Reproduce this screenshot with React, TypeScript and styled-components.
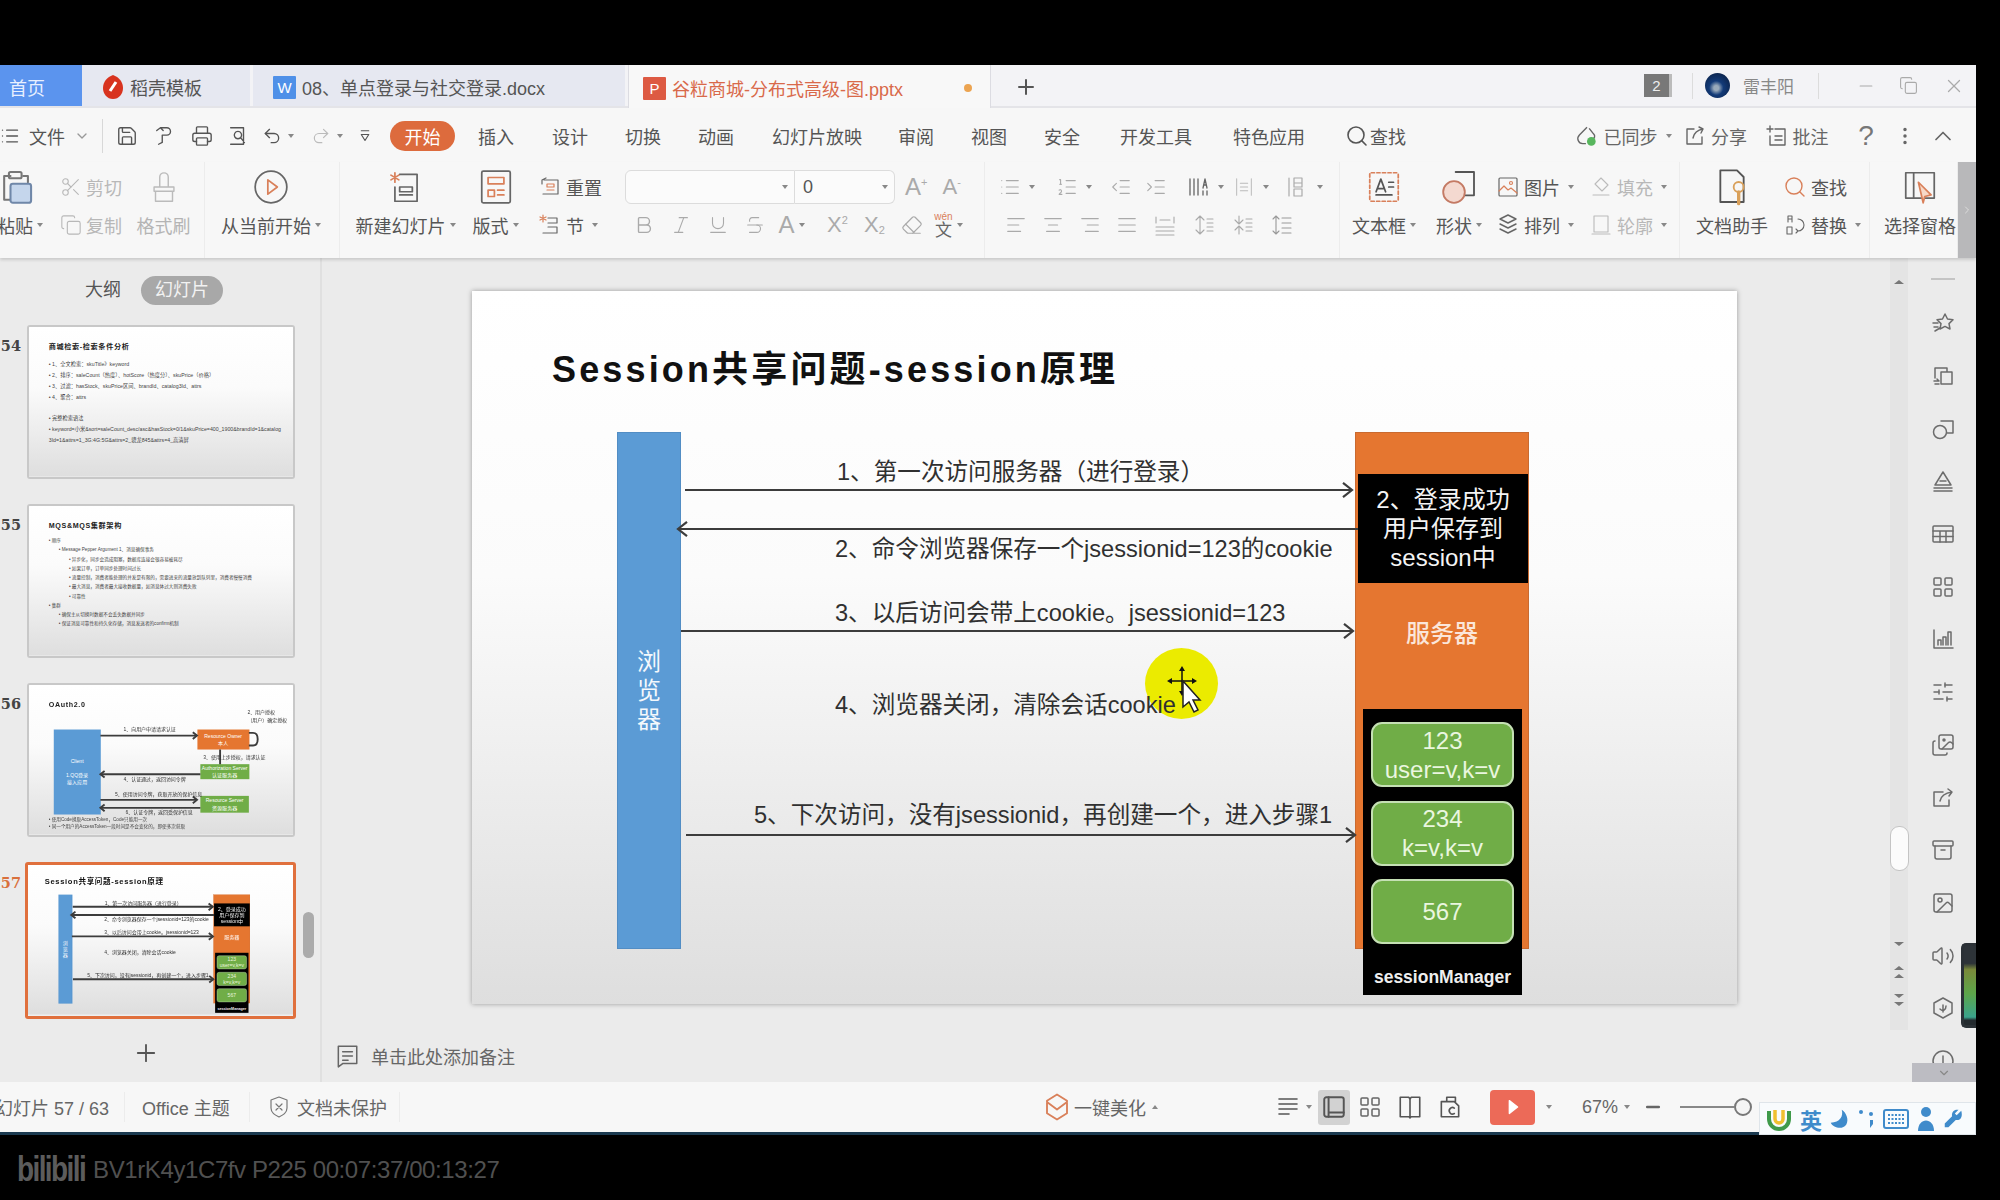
import React from "react";
import styled, { createGlobalStyle } from "styled-components";
import {
  AlignCenter,
  AlignJustify,
  AlignLeft,
  AlignRight,
  Archive,
  Bold,
  ChevronDown,
  ChevronRight,
  ChevronUp,
  Copy,
  Eraser,
  Image as ImageIcon,
  Images,
  IndentDecrease,
  IndentIncrease,
  Italic,
  LayoutGrid,
  List,
  ListOrdered,
  Minus,
  MoreVertical,
  Plus,
  Printer,
  Redo2,
  Save,
  Scissors,
  Search,
  SlidersHorizontal,
  Strikethrough,
  Underline,
  Undo2,
  Volume2,
  X,
} from "lucide-react";

const cjk = `"Liberation Sans", "Noto Sans CJK SC", sans-serif`;

const GlobalStyle = createGlobalStyle`
  html, body {
    margin: 0;
    background: #000;
    overflow: hidden;
  }
  * {
    box-sizing: border-box;
  }
`;

const Screen = styled.div`
  width: 2000px;
  height: 1200px;
  padding-top: 65px;
  background: #000;
  font-family: ${cjk};
  font-size: 18px;
  color: #555;
  filter: blur(0.7px);
  overflow: hidden;
  position: relative;
`;

const Window = styled.div`
  width: 1976px;
  height: 1067px;
  display: flex;
  flex-direction: column;
  background: #f6f6f6;
  position: relative;
  overflow: hidden;
`;

/* ---- tab bar ---- */

const TabBar = styled.div`
  height: 43px;
  flex: none;
  display: flex;
  align-items: stretch;
  background: #f3f3f6;
  border-bottom: 2px solid #e4e4e8;
`;

const HomeTab = styled.div`
  width: 82px;
  display: flex;
  align-items: center;
  padding: 3px 0 0 9px;
  background: #5b94ee;
  color: #e8f0ff;
`;

const Tab = styled.div<{ $w: number; $active?: boolean }>`
  width: ${(p) => p.$w}px;
  display: flex;
  align-items: center;
  gap: 6px;
  padding-left: ${(p) => (p.$active ? 14 : 20)}px;
  padding-top: 3px;
  margin-right: ${(p) => (p.$active ? 0 : 3)}px;
  background: ${(p) => (p.$active ? "#f8f8f8" : "#e6e8f1")};
  color: ${(p) => (p.$active ? "#d9694a" : "#555")};
  border-left: ${(p) => (p.$active ? "1px solid #dcdce2" : "0")};
  border-right: ${(p) => (p.$active ? "1px solid #dcdce2" : "0")};
  height: ${(p) => (p.$active ? 43 : 41)}px;
`;

const TabDot = styled.span`
  width: 8px;
  height: 8px;
  border-radius: 50%;
  background: #eca451;
  margin-left: auto;
  margin-right: 18px;
`;

const TabLogo = styled.span<{ $bg: string }>`
  width: 23px;
  height: 23px;
  flex: none;
  display: flex;
  align-items: center;
  justify-content: center;
  background: ${(p) => p.$bg};
  color: #fff;
  font-size: 15px;
  border-radius: 1px;
`;

const AddTab = styled.div`
  width: 60px;
  display: flex;
  align-items: center;
  justify-content: center;
  color: #555;
  margin-left: 5px;
  padding-top: 3px;
`;

const Spring = styled.div`
  flex: 1;
`;

const CountBadge = styled.div`
  width: 28px;
  height: 23px;
  align-self: center;
  display: flex;
  align-items: center;
  justify-content: center;
  background: #787878;
  color: #eee;
  font-size: 15px;
  border-right: 3px solid #bbb;
  margin-right: 20px;
`;

const BarDivider = styled.div<{ $ml?: number; $mr?: number }>`
  width: 1px;
  height: 26px;
  align-self: center;
  background: #dcdcdc;
  margin-left: ${(p) => p.$ml ?? 0}px;
  margin-right: ${(p) => p.$mr ?? 0}px;
`;

const Avatar = styled.div`
  width: 25px;
  height: 25px;
  align-self: center;
  border-radius: 50%;
  background: radial-gradient(circle at 45% 60%, #9ab 0 12%, #123a78 35%, #0a1d3f 90%);
  margin-right: 13px;
`;

const UserName = styled.div`
  align-self: center;
  color: #888;
  width: 54px;
  font-size: 17px;
  white-space: nowrap;
`;

const WindowButton = styled.div<{ $mr: number }>`
  align-self: center;
  display: flex;
  color: #aaa;
  margin-right: ${(p) => p.$mr}px;
`;

/* ---- menu row ---- */

const MenuRow = styled.div`
  height: 54px;
  flex: none;
  display: flex;
  align-items: center;
  background: #f7f7f7;
  white-space: nowrap;
  padding-top: 2px;
`;

const MenuLead = styled.div`
  width: 103px;
  display: flex;
  align-items: center;
  gap: 9px;
  height: 34px;
  border-right: 1px solid #d8d8d8;
`;

const QuickTool = styled.div<{ $w: number }>`
  width: ${(p) => p.$w}px;
  flex: none;
  display: flex;
  align-items: center;
  justify-content: center;
  gap: 2px;
`;

const Caret = styled.span<{ $up?: boolean }>`
  display: inline-block;
  flex: none;
  width: 0;
  height: 0;
  margin-left: 4px;
  border-left: 3px solid transparent;
  border-right: 3px solid transparent;
  border-${(p) => (p.$up ? "bottom" : "top")}: 4px solid #888;
  vertical-align: middle;
`;

const StartPill = styled.div`
  width: 65px;
  height: 30px;
  flex: none;
  margin-left: 11px;
  border-radius: 15px;
  display: flex;
  align-items: center;
  justify-content: center;
  background: #dd6b3d;
  color: #fff;
`;

const MenuItem = styled.div<{ $ml: number }>`
  margin-left: ${(p) => p.$ml}px;
  color: #555;
  display: flex;
  align-items: center;
  gap: 1px;
`;

const MenuRight = styled.div<{ $w: number }>`
  width: ${(p) => p.$w}px;
  flex: none;
  display: flex;
  align-items: center;
  justify-content: center;
  gap: 4px;
  color: #666;
`;

const QuestionMark = styled.span`
  font-size: 28px;
  color: #777;
`;

const MenuEndGap = styled.div`
  width: 6px;
  flex: none;
`;

/* ---- ribbon ---- */

const Ribbon = styled.div`
  height: 96px;
  flex: none;
  display: flex;
  background: #f7f7f7;
  box-shadow: 0 2px 3px rgba(0, 0, 0, 0.14);
  position: relative;
  z-index: 2;
  white-space: nowrap;
`;

const RibbonGroup = styled.div<{ $w: number; $pl?: number }>`
  width: ${(p) => p.$w}px;
  flex: none;
  display: flex;
  padding-top: 6px;
  padding-left: ${(p) => p.$pl ?? 0}px;
  border-right: 1px solid #ececec;
`;

const BigTool = styled.div<{ $w: number; $ml?: number; $off?: boolean }>`
  width: ${(p) => p.$w}px;
  margin-left: ${(p) => p.$ml ?? 0}px;
  flex: none;
  display: flex;
  flex-direction: column;
  align-items: center;
  color: ${(p) => (p.$off ? "#b4b4b4" : "#555")};
`;

const BigIcon = styled.div`
  height: 38px;
  display: flex;
  align-items: center;
  justify-content: center;
`;

const BigLabel = styled.div`
  height: 38px;
  display: flex;
  align-items: center;
`;

const SmallStack = styled.div<{ $w: number; $ml?: number }>`
  width: ${(p) => p.$w}px;
  margin-left: ${(p) => p.$ml ?? 0}px;
  flex: none;
  display: flex;
  flex-direction: column;
`;

const SmallTool = styled.div<{ $off?: boolean }>`
  height: 38px;
  display: flex;
  align-items: center;
  gap: 4px;
  color: ${(p) => (p.$off ? "#b8b8b8" : "#555")};
`;

const FontPanel = styled.div`
  margin-left: 21px;
  display: flex;
  flex-direction: column;
`;

const PanelRow = styled.div<{ $gap?: number; $pl?: number }>`
  height: 38px;
  display: flex;
  align-items: center;
  gap: ${(p) => p.$gap ?? 0}px;
  padding-left: ${(p) => p.$pl ?? 0}px;
  color: #aaa;
`;

const FormatCell = styled.div<{ $ml?: number }>`
  width: 37px;
  flex: none;
  margin-left: ${(p) => p.$ml ?? 0}px;
  display: flex;
  align-items: center;
  justify-content: center;
`;

const ParagraphCell = styled.div<{ $w: number }>`
  width: ${(p) => p.$w}px;
  flex: none;
  display: flex;
  align-items: center;
  gap: 4px;
`;

const SelectBox = styled.div<{ $w: number; $first?: boolean }>`
  width: ${(p) => p.$w}px;
  height: 34px;
  display: flex;
  align-items: center;
  justify-content: space-between;
  padding: 0 6px 0 8px;
  background: #fbfbfb;
  border: 1px solid #dcdcdc;
  border-left: ${(p) => (p.$first ? "1px solid #dcdcdc" : "0")};
  border-radius: ${(p) => (p.$first ? "6px 0 0 6px" : "0 6px 6px 0")};
  color: #555;
`;

const Sup = styled.span<{ $sub?: boolean }>`
  font-size: 11px;
  margin-top: ${(p) => (p.$sub ? 10 : -10)}px;
`;

const GreyLetter = styled.span<{ $size: number; $ml?: number }>`
  font-size: ${(p) => p.$size}px;
  margin-left: ${(p) => p.$ml ?? 0}px;
  color: #aaa;
  display: flex;
  align-items: center;
`;

const Pinyin = styled.span`
  display: flex;
  flex-direction: column;
  align-items: center;
  color: #666;
  font-size: 17px;
  line-height: 17px;
`;

const PinyinTop = styled.span`
  font-size: 10px;
  line-height: 10px;
  color: #d9805a;
`;

const ParagraphPanel = styled.div`
  display: flex;
  flex-direction: column;
  padding-left: 14px;
`;

const RibbonScroll = styled.div`
  width: 18px;
  flex: none;
  background: #b8b8ba;
  display: flex;
  align-items: center;
  justify-content: center;
  color: #ddd;
`;

/* ---- work area ---- */

const Work = styled.div`
  flex: 1;
  min-height: 0;
  display: flex;
  background: #ebebeb;
`;

const SidePanel = styled.div`
  width: 322px;
  flex: none;
  position: relative;
  display: flex;
  flex-direction: column;
  border-right: 2px solid #e0e0e0;
`;

const ViewSwitch = styled.div`
  height: 67px;
  padding-top: 18px;
  padding-left: 85px;
  display: flex;
  gap: 20px;
  align-items: flex-start;
`;

const ViewLabel = styled.div`
  height: 29px;
  line-height: 29px;
  color: #555;
`;

const ViewPill = styled.div`
  width: 82px;
  height: 29px;
  line-height: 29px;
  border-radius: 15px;
  text-align: center;
  background: #a8a8a8;
  color: #f2f2f2;
`;

const ThumbList = styled.div`
  display: flex;
  flex-direction: column;
  gap: 25px;
`;

const ThumbRow = styled.div`
  display: flex;
  align-items: flex-start;
`;

const ThumbNumber = styled.div<{ $active?: boolean }>`
  width: 21px;
  margin-right: 6px;
  padding-top: 12px;
  text-align: right;
  font-family: "DejaVu Serif", serif;
  font-weight: 700;
  font-size: 14.5px;
  color: ${(p) => (p.$active ? "#d9703c" : "#444")};
  white-space: nowrap;
`;

const ThumbFrame = styled.div<{ $active?: boolean }>`
  width: ${(p) => (p.$active ? 271 : 268)}px;
  height: ${(p) => (p.$active ? 157 : 154)}px;
  border: ${(p) => (p.$active ? "3px solid #e0703d" : "2px solid #c8c8c8")};
  border-radius: 3px;
  margin-left: ${(p) => (p.$active ? -2 : 0)}px;
  overflow: hidden;
  background: #fff;
`;

const ThumbScale = styled.div`
  width: 1265px;
  height: 713px;
  transform: scale(0.21);
  transform-origin: 0 0;
  position: relative;
`;

const SideScrollThumb = styled.div`
  position: absolute;
  left: 303px;
  top: 654px;
  width: 11px;
  height: 46px;
  border-radius: 6px;
  background: #ababab;
`;

const AddSlide = styled.div`
  margin-top: 20px;
  display: flex;
  justify-content: center;
  padding-right: 29px;
  color: #555;
`;

const CanvasColumn = styled.div`
  flex: 1;
  min-width: 0;
  display: flex;
  flex-direction: column;
`;

const CanvasArea = styled.div`
  flex: 1;
  padding: 33px 0 0 150px;
`;

const SlideFrame = styled.div`
  width: 1265px;
  height: 713px;
  position: relative;
  overflow: visible;
  background: linear-gradient(#fff 0%, #fbfbfb 40%, #dedede 100%);
  box-shadow: 0 0 5px rgba(0, 0, 0, 0.35);
`;

const NotesBar = styled.div`
  height: 52px;
  flex: none;
  display: flex;
  align-items: center;
  gap: 11px;
  padding-left: 12px;
  color: #666;
`;

const ScrollColumn = styled.div`
  width: 35px;
  flex: none;
  position: relative;
`;

const ScrollTrack = styled.div`
  position: absolute;
  left: 10px;
  top: 0;
  width: 18px;
  height: 772px;
  background: #e4e4e4;
`;

const ScrollThumb = styled.div`
  position: absolute;
  left: 10px;
  top: 568px;
  width: 19px;
  height: 45px;
  border-radius: 9px;
  background: #fbfbfb;
  border: 1px solid #c4c4c4;
`;

const ScrollArrow = styled.div<{ $top: number; $up?: boolean }>`
  position: absolute;
  left: 14px;
  top: ${(p) => p.$top}px;
  width: 0;
  height: 0;
  border-left: 5px solid transparent;
  border-right: 5px solid transparent;
  border-${(p) => (p.$up ? "bottom" : "top")}: 4px solid #777;
`;

const IconRail = styled.div`
  width: 61px;
  flex: none;
  display: flex;
  flex-direction: column;
  align-items: center;
  position: relative;
  padding: 20px 5px 0 0;
`;

const RailHandle = styled.div`
  width: 24px;
  height: 5px;
  border-top: 1px solid #c4c4c4;
  border-bottom: 1px solid #c4c4c4;
  margin-bottom: 17px;
`;

const RailIcon = styled.div`
  height: 52.7px;
  flex: none;
  display: flex;
  align-items: center;
  justify-content: center;
  color: #6c6c6c;
`;

const RailFold = styled.div`
  position: absolute;
  left: -3px;
  bottom: 0;
  width: 64px;
  height: 19px;
  background: #bcbcc2;
  display: flex;
  align-items: center;
  justify-content: center;
  color: #888;
`;

const LevelMeter = styled.div`
  position: absolute;
  right: 0;
  top: 685px;
  width: 15px;
  height: 85px;
  border-radius: 5px 0 0 5px;
  background: linear-gradient(#2d3338 0 22%, #7a8a3a 30%, #5da64a 60%, #3aa38c 90%, #232a2e 94%);
  border: 3px solid #2b3136;
  border-right: 0;
`;

/* ---- status bar ---- */

const StatusBar = styled.div`
  height: 50px;
  flex: none;
  display: flex;
  align-items: center;
  background: #f7f7f7;
  font-size: 18px;
  white-space: nowrap;
  color: #666;
`;

const StatusCell = styled.div<{ $w: number; $pl?: number; $ml?: number }>`
  width: ${(p) => p.$w}px;
  margin-left: ${(p) => p.$ml ?? 0}px;
  padding-left: ${(p) => p.$pl ?? 0}px;
  height: 30px;
  display: flex;
  align-items: center;
  gap: 6px;
  border-right: 1px solid #ececec;
  flex: none;
`;

const StatusTool = styled.div<{ $w: number; $on?: boolean; $ml?: number; $pl?: number }>`
  width: ${(p) => p.$w}px;
  height: 35px;
  flex: none;
  margin-left: ${(p) => p.$ml ?? 0}px;
  padding-left: ${(p) => p.$pl ?? 0}px;
  display: flex;
  align-items: center;
  justify-content: center;
  gap: 2px;
  background: ${(p) => (p.$on ? "#d2d2d2" : "transparent")};
  border-radius: 3px;
  color: #666;
`;

const PlayButton = styled.div`
  width: 45px;
  height: 35px;
  flex: none;
  border-radius: 4px;
  background: #ec6a58;
  display: flex;
  align-items: center;
  justify-content: center;
  margin-left: 20px;
`;

const SliderTrack = styled.div`
  width: 54px;
  height: 2px;
  background: #888;
  margin-left: 14px;
`;

const SliderKnob = styled.div`
  width: 18px;
  height: 18px;
  flex: none;
  border: 2px solid #777;
  border-radius: 50%;
  background: #f4f4f4;
`;

const TaskLine = styled.div`
  height: 3px;
  width: 1976px;
  background: #1b3a50;
`;

const ImeBar = styled.div`
  position: absolute;
  left: 1759px;
  top: 1102px;
  width: 217px;
  height: 33px;
  background: #f8fbfd;
  border: 1px solid #dfe5ea;
  display: flex;
  align-items: center;
  padding-left: 4px;
  gap: 6px;
  color: #3f8bcb;
  font-size: 22px;
  font-weight: 700;
`;

/* ---- bottom caption ---- */

const Caption = styled.div`
  height: 62px;
  display: flex;
  align-items: center;
  padding: 8px 0 0 17px;
  gap: 8px;
  color: #505050;
`;

const BiliMark = styled.div`
  font-size: 28px;
  font-weight: 700;
  letter-spacing: -1.6px;
  line-height: 34px;
  color: #5c5c5c;
  transform: scaleY(1.25);
`;

const CaptionText = styled.div`
  font-family: "Liberation Sans", sans-serif;
  font-size: 24px;
  letter-spacing: -0.4px;
`;

/* ---- slide content ---- */

const SlideTitle = styled.div`
  position: absolute;
  left: 80px;
  top: 54px;
  height: 50px;
  line-height: 50px;
  font-size: 36px;
  font-weight: 700;
  letter-spacing: 3.15px;
  color: #111;
  white-space: nowrap;
`;

const BrowserBar = styled.div`
  position: absolute;
  left: 145px;
  top: 141px;
  width: 64px;
  height: 517px;
  background: #5b9bd5;
  border: 1px solid #528dc4;
  color: #f4f8fc;
  font-size: 24px;
  line-height: 29px;
  display: flex;
  align-items: center;
  justify-content: center;
  text-align: center;
`;

const ServerBlock = styled.div`
  position: absolute;
  left: 883px;
  top: 141px;
  width: 174px;
  height: 517px;
  background: #e57630;
  border: 1px solid #c96a30;
`;

const LoginBox = styled.div`
  position: absolute;
  left: 2px;
  top: 41px;
  width: 170px;
  height: 109px;
  padding-top: 11px;
  background: #000;
  color: #f4f4f4;
  font-size: 24px;
  line-height: 29px;
  text-align: center;
`;

const ServerName = styled.div`
  position: absolute;
  left: 0;
  right: 0;
  top: 184px;
  text-align: center;
  font-size: 24px;
  line-height: 34px;
  font-weight: 500;
  color: #fbe6da;
`;

const SessionManager = styled.div`
  position: absolute;
  left: 891px;
  top: 418px;
  width: 159px;
  height: 286px;
  background: #000;
  display: flex;
  flex-direction: column;
  align-items: center;
  padding-top: 13px;
`;

const SessionCard = styled.div`
  width: 143px;
  height: 65px;
  margin-bottom: 13.5px;
  border-radius: 11px;
  background: #70ad47;
  border: 2px solid #c5e0b4;
  color: #eaf6df;
  font-size: 24px;
  line-height: 29px;
  display: flex;
  align-items: center;
  justify-content: center;
  text-align: center;
`;

const SessionManagerName = styled.div`
  color: #eee;
  font-size: 17.5px;
  font-weight: 700;
  line-height: 28px;
  margin-top: 5px;
`;

const ArrowLayer = styled.svg`
  position: absolute;
  left: 0;
  top: 0;
  overflow: visible;
`;

const StepLabel = styled.div<{ $x: number; $y: number }>`
  position: absolute;
  left: ${(p) => p.$x}px;
  top: ${(p) => p.$y}px;
  font-size: 23.6px;
  line-height: 34px;
  color: #303030;
  white-space: nowrap;
`;

const Highlight = styled.div`
  position: absolute;
  left: 673px;
  top: 357px;
  width: 73px;
  height: 71px;
  border-radius: 50%;
  background: #ebeb00;
`;

const PointerLayer = styled.svg`
  position: absolute;
  left: 690px;
  top: 370px;
`;

const ThumbTitle = styled.div`
  position: absolute;
  left: 94px;
  top: 70px;
  font-size: 34px;
  line-height: 48px;
  font-weight: 700;
  letter-spacing: 3px;
  color: #222;
  white-space: nowrap;
`;

const ThumbBullets = styled.div<{ $top: number; $lh: number; $size: number }>`
  position: absolute;
  left: 94px;
  right: 60px;
  top: ${(p) => p.$top}px;
  font-size: ${(p) => p.$size}px;
  line-height: ${(p) => p.$lh}px;
  color: #444;
`;

const ThumbLine = styled.div<{ $level?: number }>`
  padding-left: ${(p) => (p.$level ?? 0) * 48}px;
  white-space: nowrap;
`;

const ThumbWrapLine = styled.div`
  white-space: normal;
  word-break: break-all;
`;

const MiniBlock = styled.div<{ $x: number; $y: number; $w: number; $h: number; $bg: string }>`
  position: absolute;
  left: ${(p) => p.$x}px;
  top: ${(p) => p.$y}px;
  width: ${(p) => p.$w}px;
  height: ${(p) => p.$h}px;
  background: ${(p) => p.$bg};
  color: #fff;
  font-size: 24px;
  line-height: 34px;
  display: flex;
  flex-direction: column;
  align-items: center;
  justify-content: center;
  text-align: center;
`;

/* ---- drawn icons ---- */

const Svg = ({ s = 24, w = 1.5, c = "currentColor", children }: { s?: number; w?: number; c?: string; children: React.ReactNode }) => (
  <svg width={s} height={s} viewBox="0 0 24 24" fill="none" stroke={c} strokeWidth={w} strokeLinecap="round" strokeLinejoin="round">
    {children}
  </svg>
);

const PasteIcon = () => (
  <Svg s={38} w={1.3} c="#777">
    <path d="M6 20H2V5h4M14 5h3v4" />
    <rect x="5" y="2.5" width="8" height="4" rx="1" />
    <rect x="6" y="10" width="13" height="12" rx="1.5" fill="#c5d6ec" stroke="#6f87a8" />
  </Svg>
);

const BrushIcon = () => (
  <Svg s={34} w={1} c="#bbb">
    <path d="M9 12V5a3 3 0 0 1 6 0v7M5 12h14v3H5zM6 15v7h12v-7" />
  </Svg>
);

const PlayCircle = () => (
  <Svg s={38} w={1.1} c="#666">
    <circle cx="12" cy="12" r="10" />
    <path d="M10 7.5 16 12l-6 4.5z" stroke="#d9805a" />
  </Svg>
);

const NewSlideIcon = () => (
  <Svg s={38} w={1.1} c="#666">
    <path d="M8 4h11v17H5v-9" />
    <path d="M8 12h8v3H8zM8 17h8" />
    <path d="M5 3v6M2.5 4.5l5 3M7.500 4.500l-5 3" stroke="#d9805a" />
  </Svg>
);

const LayoutIcon = () => (
  <Svg s={38} w={1.1} c="#666">
    <rect x="3" y="2" width="18" height="20" rx="1" />
    <path d="M7 6h10v4H7zM7 14h4v4H7zM13 14h4M13 17h4" stroke="#d9805a" />
  </Svg>
);

const ResetIcon = () => (
  <Svg s={24} w={1.2} c="#666">
    <path d="M6 5h14v14H5M4 9V5l4-2" />
    <path d="M9 9h7v3H9zM9 15h7" stroke="#d9805a" />
  </Svg>
);

const SectionIcon = () => (
  <Svg s={24} w={1.2} c="#666">
    <path d="M10 5h9v5h-9M10 14h9v6H5" />
    <path d="M5 2v7M2 4l6 3M8 4 2 7" stroke="#d9805a" />
  </Svg>
);

const TextBoxIcon = () => (
  <Svg s={38} w={1.1} c="#d9805a">
    <rect x="3" y="3" width="18" height="18" rx="1" strokeDasharray="2 1.500" />
    <path d="M7 15l3-8 3 8M8 13h4M15 9h3M15 12h3" stroke="#555" />
    <path d="M7 17h10" stroke="#555" />
  </Svg>
);

const ShapeIcon = () => (
  <Svg s={40} w={1.1} c="#555">
    <path d="M10 3h11v14h-6" />
    <circle cx="9" cy="15" r="6.500" fill="#f4d9d0" stroke="#c47a64" />
  </Svg>
);

const PictureIcon = () => (
  <Svg s={24} w={1.2} c="#666">
    <rect x="3" y="3" width="18" height="18" rx="1" />
    <path d="m3 16 5-5 4 4 3-2 6 5" stroke="#d9805a" />
    <circle cx="15" cy="8" r="1.500" stroke="#d9805a" />
  </Svg>
);

const FillIcon = () => (
  <Svg s={24} w={1.1} c="#bbb">
    <path d="m12 3 7 7-6 6-7-7zM4 20h16" />
  </Svg>
);

const ArrangeIcon = () => (
  <Svg s={24} w={1.4} c="#666">
    <path d="m12 2 8 4-8 4-8-4zM4 11l8 4 8-4M4 16l8 4 8-4" />
  </Svg>
);

const OutlineIcon = () => (
  <Svg s={24} w={1.1} c="#bbb">
    <rect x="5" y="3" width="14" height="16" />
    <path d="M3 21h18" />
  </Svg>
);

const AssistantIcon = () => (
  <Svg s={40} w={1.1} c="#555">
    <path d="M5 2h10l4 4v15H5z" />
    <circle cx="16" cy="12" r="3" stroke="#d9a05a" />
    <path d="M16 15v7" stroke="#d9a05a" strokeWidth="2" />
  </Svg>
);

const ReplaceIcon = () => (
  <Svg s={24} w={1.1} c="#666">
    <path d="M5 3h4M5 3v6M9 3v6M5 6h4M4 14h5v7H4zM15 6a6 6 0 0 1 0 12l-2-2m2 2-2 2" />
  </Svg>
);

const PaneIcon = () => (
  <Svg s={38} w={1.1} c="#666">
    <rect x="3" y="3" width="18" height="16" />
    <path d="M8 3v16" />
    <path d="m11 9 8 8-4 1-1 4z" fill="#f6d9c8" stroke="#d9805a" />
  </Svg>
);

const SyncIcon = () => (
  <svg width="26" height="26" viewBox="0 0 24 24" fill="none" stroke="#666" strokeWidth="1.300">
    <path d="M12 4 5 11c-3 3-1 8 3 8h3M14 5l4 5c2 2 1 4-1 5" />
    <circle cx="16" cy="17" r="4" fill="#58b65e" stroke="none" />
  </svg>
);

const ShareOut = () => (
  <Svg s={24} w={1.4} c="#666">
    <path d="M11 5H4v15h15v-7M10 14c1-5 4-8 10-9m-4-2 4 2-2 4" />
  </Svg>
);

const CommentIcon = () => (
  <Svg s={24} w={1.4} c="#666">
    <path d="M5 2v6M2 5h6M10 5h10v16H5v-9M10 12h7M10 16h7" />
  </Svg>
);

const SpeedStar = () => (
  <Svg>
    <path d="m14 3 2.500 5 5.500.8-4 3.800 1 5.400-5-2.600-5 2.600 1-5.400-4-3.800 5.500-.8z" />
    <path d="M2 12h5M3 16h4M4 20l5-3" />
  </Svg>
);

const SwapSlides = () => (
  <Svg>
    <path d="M4 14V4h12v4M10 8h11v12H10z" />
    <path d="M3 17h5l-2-2M8 20H4" />
  </Svg>
);

const Shapes = () => (
  <Svg>
    <path d="M10 4h12v12h-6" />
    <circle cx="9" cy="15" r="6.500" />
  </Svg>
);

const TextFill = () => (
  <Svg>
    <path d="M12 3 4 16h16zM9 12h6M3 19h18M3 22h18" />
  </Svg>
);

const TableIcon = () => (
  <Svg>
    <rect x="2" y="4" width="20" height="16" rx="1" />
    <path d="M2 9h20M2 14.500h20M9 9v11M15 9v11" />
  </Svg>
);

const BarsIcon = () => (
  <Svg>
    <path d="M3 3v18h19M7 18v-5h3v5M12 18V10h3v8M17 18V5h3v13" />
  </Svg>
);

const ShareBox = () => (
  <Svg>
    <path d="M12 6H3v14h15v-6M9 15c1-5 5-8 12-9m-4-3 4 3-3 4" />
  </Svg>
);

const HexBadge = () => (
  <Svg>
    <path d="m12 2 9 5v10l-9 5-9-5V7z" />
    <path d="M9 13c3 3 6 1 6-3M12 9v7" />
  </Svg>
);

const InfoClip = () => (
  <Svg>
    <circle cx="12" cy="12" r="10" />
    <path d="M12 7v8" />
  </Svg>
);

const NotesIcon = () => (
  <Svg s={26} w={1.4} c="#666">
    <path d="M4 3h17v16H8l-4 3zM8 8h9M8 12h9M8 16h5" />
  </Svg>
);

const ShieldMark = () => (
  <Svg s={24} w={1.2} c="#777">
    <path d="M12 2 20 5v8c0 5-4 7-8 9-4-2-8-4-8-9V5zM9 9l6 6M15 9l-6 6" />
  </Svg>
);

const BeautifyIcon = () => (
  <Svg s={30} w={1.5} c="#d9805a">
    <path d="M12 2 4 7v10l8 5 8-5V7zM4 8l8 6 8-6" />
  </Svg>
);

const OutlineList = () => (
  <Svg s={24} w={1.6} c="#555">
    <path d="M3 4h18M3 9h18M3 14h18M3 19h10" />
  </Svg>
);

const NormalView = () => (
  <Svg s={26} w={1.8} c="#555">
    <rect x="3" y="3" width="18" height="18" rx="2" />
    <path d="M7 3v18M7 17h14" />
  </Svg>
);

const BookView = () => (
  <Svg s={26} w={1.5} c="#555">
    <path d="M3 3h8l1 2 1-2h8v18h-8l-1 1-1-1H3zM12 5v16" />
  </Svg>
);

const TapeView = () => (
  <Svg s={26} w={1.5} c="#555">
    <path d="M9 7V3h8v4M4 7h12l4 4v10H4zM16 13a3 3 0 1 0 0 5" />
  </Svg>
);

/* ---- data ---- */

const steps = [
  { x: 365, y: 164, text: "1、第一次访问服务器（进行登录）" },
  { x: 363, y: 241, text: "2、命令浏览器保存一个jsessionid=123的cookie" },
  { x: 363, y: 305, text: "3、以后访问会带上cookie。jsessionid=123" },
  { x: 363, y: 397, text: "4、浏览器关闭，清除会话cookie" },
  { x: 282, y: 507, text: "5、下次访问，没有jsessionid，再创建一个，进入步骤1" },
];

const sessionArrows = [
  { y: 199, from: 213, to: 880 },
  { y: 238, from: 886, to: 206 },
  { y: 340, from: 209, to: 881 },
  { y: 544, from: 214, to: 883 },
];

const oauthArrows = [
  { y: 241, from: 340, to: 800 },
  { y: 425, from: 816, to: 340 },
  { y: 547, from: 340, to: 800 },
  { y: 585, from: 816, to: 340 },
];

const Arrows = ({ items, w, head }: { items: { y: number; from: number; to: number }[]; w: number; head: number }) => (
  <ArrowLayer width={1265} height={713} fill="none" stroke="#3c3c3c" strokeWidth={w}>
    {items.map((a) => {
      const d = a.to > a.from ? -head : head;
      return (
        <g key={a.y}>
          <path d={`M${a.from} ${a.y}H${a.to}`} />
          <path d={`M${a.to + d} ${a.y - head * 0.8}L${a.to} ${a.y}L${a.to + d} ${a.y + head * 0.8}`} />
        </g>
      );
    })}
  </ArrowLayer>
);

const SessionSlide = ({ cursor, thick }: { cursor?: boolean; thick?: boolean }) => (
  <>
    <SlideTitle>Session共享问题-session原理</SlideTitle>
    <BrowserBar>
      浏<br />览<br />器
    </BrowserBar>
    <ServerBlock>
      <LoginBox>
        2、登录成功
        <br />
        用户保存到
        <br />
        session中
      </LoginBox>
      <ServerName>服务器</ServerName>
    </ServerBlock>
    <SessionManager>
      <SessionCard>
        123
        <br />
        user=v,k=v
      </SessionCard>
      <SessionCard>
        234
        <br />
        k=v,k=v
      </SessionCard>
      <SessionCard>567</SessionCard>
      <SessionManagerName>sessionManager</SessionManagerName>
    </SessionManager>
    {cursor && <Highlight />}
    <Arrows items={sessionArrows} w={thick ? 9 : 2.2} head={thick ? 20 : 9} />
    {steps.map((s) => (
      <StepLabel key={s.text} $x={s.x} $y={s.y}>
        {s.text}
      </StepLabel>
    ))}
    {cursor && (
      <PointerLayer width="40" height="60" viewBox="0 0 40 60">
        <path d="M20 10v20M10 20h20" stroke="#111" strokeWidth="1.500" />
        <path d="M20 5l-3 5h6zM20 35l-3-5h6zM5 20l5-3v6zM35 20l-5-3v6z" fill="#111" />
        <path d="M21 20v26l6-5 5 10 4-2-5-10h7z" fill="#fff" stroke="#222" strokeWidth="1.500" />
      </PointerLayer>
    )}
  </>
);

const OauthSlide = () => (
  <>
    <ThumbTitle>OAuth2.0</ThumbTitle>
    <MiniBlock $x={118} $y={212} $w={222} $h={401} $bg="#5b9bd5">
      <span>Client</span>
      <span>&nbsp;</span>
      <span>1.QQ登录</span>
      <span>接入应用</span>
    </MiniBlock>
    <MiniBlock $x={802} $y={212} $w={245} $h={95} $bg="#e57630">
      <span>Resource Owner</span>
      <span>本人</span>
    </MiniBlock>
    <MiniBlock $x={816} $y={377} $w={231} $h={71} $bg="#70ad47">
      <span>Authorization Server</span>
      <span>认证服务器</span>
    </MiniBlock>
    <MiniBlock $x={816} $y={528} $w={231} $h={80} $bg="#70ad47">
      <span>Resource Server</span>
      <span>资源服务器</span>
    </MiniBlock>
    <Arrows items={oauthArrows} w={9} head={20} />
    <ArrowLayer width={1265} height={713} fill="none" stroke="#3c3c3c" strokeWidth={9}>
      <path d="M910 307V377M1047 228h20q22 0 22 30t-22 30h-20" />
    </ArrowLayer>
    <StepLabel $x={450} $y={195}>
      1、向用户申请请求认证
    </StepLabel>
    <StepLabel $x={830} $y={325}>
      3、使用上步授权，请求认证
    </StepLabel>
    <StepLabel $x={450} $y={430}>
      4、认证通过，返回访问令牌
    </StepLabel>
    <StepLabel $x={410} $y={505}>
      5、使用访问令牌，获取开放的保护信息
    </StepLabel>
    <StepLabel $x={460} $y={590}>
      6、认证令牌，返回受保护信息
    </StepLabel>
    <StepLabel $x={1040} $y={115}>
      2、用户授权
      <br />
      （用户）确定授权
    </StepLabel>
    <ThumbBullets $top={622} $lh={34} $size={22}>
      <ThumbLine>• 使用Code换取AccessToken，Code只能用一次</ThumbLine>
      <ThumbLine>• 同一个用户的AccessToken一段时间是不会变化的，即使多次获取</ThumbLine>
    </ThumbBullets>
  </>
);

const App = () => {
  return (
    <Screen>
      <GlobalStyle />
      <Window>
        <TabBar>
          <HomeTab>首页</HomeTab>
          <Tab $w={168}>
            <svg width="22" height="26" viewBox="0 0 22 26">
              <path d="M11 1C5 3 1 8 1 14c0 6 4 11 10 11s10-5 10-11C21 8 17 3 11 1z" fill="#d8331f" />
              <path d="M8 17l6-9" stroke="#fff" strokeWidth="3" />
            </svg>
            稻壳模板
          </Tab>
          <Tab $w={372}>
            <TabLogo $bg="#4f90e8">W</TabLogo>
            08、单点登录与社交登录.docx
          </Tab>
          <Tab $w={363} $active>
            <TabLogo $bg="#dd5a43">P</TabLogo>
            谷粒商城-分布式高级-图.pptx
            <TabDot />
          </Tab>
          <AddTab>
            <Plus size={24} strokeWidth={2} />
          </AddTab>
          <Spring />
          <CountBadge>2</CountBadge>
          <BarDivider $mr={12} />
          <Avatar />
          <UserName>雷丰阳</UserName>
          <BarDivider $ml={21} $mr={37} />
          <WindowButton $mr={23}>
            <Minus size={20} strokeWidth={1.4} />
          </WindowButton>
          <WindowButton $mr={25}>
            <Copy size={19} strokeWidth={1.4} />
          </WindowButton>
          <WindowButton $mr={11}>
            <X size={22} strokeWidth={1.4} />
          </WindowButton>
        </TabBar>

        <MenuRow>
          <MenuLead>
            <List size={20} strokeWidth={1.6} />
            文件
            <ChevronDown size={16} color="#999" />
          </MenuLead>
          <QuickTool $w={48}>
            <Save size={22} strokeWidth={1.5} />
          </QuickTool>
          <QuickTool $w={28}>
            <Svg s={22}>
              <path d="M7 3h7a4 4 0 0 1 0 8H9M9 11v8M5 21l4-2M3 6l4-3 3 3" />
            </Svg>
          </QuickTool>
          <QuickTool $w={45}>
            <Printer size={22} strokeWidth={1.5} />
          </QuickTool>
          <QuickTool $w={28}>
            <Svg s={22}>
              <path d="M4 3h14v18H4M12 15a4 4 0 1 0-.1 0M15 14l4 5" />
            </Svg>
          </QuickTool>
          <QuickTool $w={52}>
            <Undo2 size={20} strokeWidth={1.6} />
            <Caret />
          </QuickTool>
          <QuickTool $w={46}>
            <Redo2 size={20} strokeWidth={1.4} color="#bbb" />
            <Caret />
          </QuickTool>
          <QuickTool $w={29}>
            <Svg s={18}>
              <path d="M7 5h10M7 10l5 8 5-8z" />
            </Svg>
          </QuickTool>
          <StartPill>开始</StartPill>
          <MenuItem $ml={23}>插入</MenuItem>
          <MenuItem $ml={38}>设计</MenuItem>
          <MenuItem $ml={37}>切换</MenuItem>
          <MenuItem $ml={37}>动画</MenuItem>
          <MenuItem $ml={38}>幻灯片放映</MenuItem>
          <MenuItem $ml={36}>审阅</MenuItem>
          <MenuItem $ml={37}>视图</MenuItem>
          <MenuItem $ml={37}>安全</MenuItem>
          <MenuItem $ml={40}>开发工具</MenuItem>
          <MenuItem $ml={41}>特色应用</MenuItem>
          <MenuItem $ml={40}>
            <Search size={24} strokeWidth={1.6} />
            查找
          </MenuItem>
          <Spring />
          <MenuRight $w={105}>
            <SyncIcon />
            已同步
            <Caret />
          </MenuRight>
          <MenuRight $w={80}>
            <ShareOut />
            分享
          </MenuRight>
          <MenuRight $w={83}>
            <CommentIcon />
            批注
          </MenuRight>
          <MenuRight $w={56}>
            <QuestionMark>?</QuestionMark>
          </MenuRight>
          <MenuRight $w={22}>
            <MoreVertical size={24} strokeWidth={1.8} />
          </MenuRight>
          <MenuRight $w={54}>
            <ChevronUp size={28} strokeWidth={1.5} />
          </MenuRight>
          <MenuEndGap />
        </MenuRow>

        <Ribbon>
          <RibbonGroup $w={205}>
            <BigTool $w={44} $ml={-2}>
              <BigIcon>
                <PasteIcon />
              </BigIcon>
              <BigLabel>
                粘贴
                <Caret />
              </BigLabel>
            </BigTool>
            <SmallStack $w={72} $ml={18}>
              <SmallTool $off>
                <Scissors size={22} strokeWidth={1.2} />
                剪切
              </SmallTool>
              <SmallTool $off>
                <Copy size={22} strokeWidth={1.2} />
                复制
              </SmallTool>
            </SmallStack>
            <BigTool $w={63} $off>
              <BigIcon>
                <BrushIcon />
              </BigIcon>
              <BigLabel>格式刷</BigLabel>
            </BigTool>
          </RibbonGroup>

          <RibbonGroup $w={135} $pl={16}>
            <BigTool $w={100}>
              <BigIcon>
                <PlayCircle />
              </BigIcon>
              <BigLabel>
                从当前开始
                <Caret />
              </BigLabel>
            </BigTool>
          </RibbonGroup>

          <RibbonGroup $w={645} $pl={14}>
            <BigTool $w={103}>
              <BigIcon>
                <NewSlideIcon />
              </BigIcon>
              <BigLabel>
                新建幻灯片
                <Caret />
              </BigLabel>
            </BigTool>
            <BigTool $w={53} $ml={12}>
              <BigIcon>
                <LayoutIcon />
              </BigIcon>
              <BigLabel>
                版式
                <Caret />
              </BigLabel>
            </BigTool>
            <SmallStack $w={66} $ml={16}>
              <SmallTool>
                <ResetIcon />
                重置
              </SmallTool>
              <SmallTool>
                <SectionIcon />
                节<Caret />
              </SmallTool>
            </SmallStack>
            <FontPanel>
              <PanelRow>
                <SelectBox $w={170} $first>
                  <span />
                  <Caret />
                </SelectBox>
                <SelectBox $w={100}>
                  0
                  <Caret />
                </SelectBox>
                <GreyLetter $size={24} $ml={10}>
                  A<Sup>+</Sup>
                </GreyLetter>
                <GreyLetter $size={22} $ml={15}>
                  A<Sup>-</Sup>
                </GreyLetter>
              </PanelRow>
              <PanelRow>
                <FormatCell>
                  <Bold size={22} strokeWidth={1.5} />
                </FormatCell>
                <FormatCell>
                  <Italic size={22} strokeWidth={1.2} />
                </FormatCell>
                <FormatCell>
                  <Underline size={22} strokeWidth={1.2} />
                </FormatCell>
                <FormatCell>
                  <Strikethrough size={22} strokeWidth={1.2} />
                </FormatCell>
                <FormatCell>
                  <GreyLetter $size={24}>
                    A<Caret />
                  </GreyLetter>
                </FormatCell>
                <FormatCell $ml={9}>
                  <GreyLetter $size={22}>
                    X<Sup>2</Sup>
                  </GreyLetter>
                </FormatCell>
                <FormatCell>
                  <GreyLetter $size={22}>
                    X<Sup $sub>2</Sup>
                  </GreyLetter>
                </FormatCell>
                <FormatCell>
                  <Eraser size={22} strokeWidth={1.3} />
                </FormatCell>
                <FormatCell>
                  <Pinyin>
                    <PinyinTop>wén</PinyinTop>文
                  </Pinyin>
                  <Caret />
                </FormatCell>
              </PanelRow>
            </FontPanel>
          </RibbonGroup>

          <RibbonGroup $w={355}>
            <ParagraphPanel>
              <PanelRow>
                <ParagraphCell $w={57}>
                  <List size={22} strokeWidth={1.2} />
                  <Caret />
                </ParagraphCell>
                <ParagraphCell $w={54}>
                  <ListOrdered size={22} strokeWidth={1.2} />
                  <Caret />
                </ParagraphCell>
                <ParagraphCell $w={35}>
                  <IndentDecrease size={22} strokeWidth={1.2} />
                </ParagraphCell>
                <ParagraphCell $w={41}>
                  <IndentIncrease size={22} strokeWidth={1.2} />
                </ParagraphCell>
                <ParagraphCell $w={47}>
                  <Svg s={24} w={1.3} c="#666">
                    <path d="M4 4v16M8 4v16M12 4v16M17 13l2-9 2 9M18 10h2M17 16v4M21 16v4" />
                  </Svg>
                  <Caret />
                </ParagraphCell>
                <ParagraphCell $w={52}>
                  <Svg s={22} w={1.1} c="#bbb">
                    <path d="M4 3v18M20 3v18M8 8h8M8 12h8M8 16h8" />
                  </Svg>
                  <Caret />
                </ParagraphCell>
                <ParagraphCell $w={40}>
                  <Svg s={24} w={1.2} c="#aaa">
                    <path d="M4 3v18M9 3h8v9H9zM9 14h8v7H9zM9 8h8" />
                  </Svg>
                  <Caret />
                </ParagraphCell>
              </PanelRow>
              <PanelRow $gap={15} $pl={6}>
                <AlignLeft size={22} strokeWidth={1.2} />
                <AlignCenter size={22} strokeWidth={1.2} />
                <AlignRight size={22} strokeWidth={1.2} />
                <AlignJustify size={22} strokeWidth={1.2} />
                <Svg s={24} w={1.1} c="#aaa">
                  <path d="M3 4v6M21 4v6M7 7h10M3 14h18M3 18h18M3 22h18" />
                </Svg>
                <Svg s={24} w={1.1} c="#aaa">
                  <path d="M8 3v18M4 7l4-4 4 4M4 17l4 4 4-4M15 6h6M15 10h6M15 14h6M15 18h6" />
                </Svg>
                <Svg s={24} w={1.1} c="#aaa">
                  <path d="M8 10V3M4 7l4 4 4-4M8 14v7M4 17l4-4 4 4M15 6h6M15 10h6M15 14h6M15 18h6" />
                </Svg>
                <Svg s={24} w={1.1} c="#999">
                  <path d="M6 3v18M3 6l3-3 3 3M3 18l3 3 3-3M12 5h9M12 10h9M12 15h9M12 20h9" />
                </Svg>
              </PanelRow>
            </ParagraphPanel>
          </RibbonGroup>

          <RibbonGroup $w={340} $pl={10}>
            <BigTool $w={68}>
              <BigIcon>
                <TextBoxIcon />
              </BigIcon>
              <BigLabel>
                文本框
                <Caret />
              </BigLabel>
            </BigTool>
            <BigTool $w={50} $ml={16}>
              <BigIcon>
                <ShapeIcon />
              </BigIcon>
              <BigLabel>
                形状
                <Caret />
              </BigLabel>
            </BigTool>
            <SmallStack $w={93} $ml={12}>
              <SmallTool>
                <PictureIcon />
                图片
                <Caret />
              </SmallTool>
              <SmallTool>
                <ArrangeIcon />
                排列
                <Caret />
              </SmallTool>
            </SmallStack>
            <SmallStack $w={80}>
              <SmallTool $off>
                <FillIcon />
                填充
                <Caret />
              </SmallTool>
              <SmallTool $off>
                <OutlineIcon />
                轮廓
                <Caret />
              </SmallTool>
            </SmallStack>
          </RibbonGroup>

          <RibbonGroup $w={190} $pl={15}>
            <BigTool $w={74}>
              <BigIcon>
                <AssistantIcon />
              </BigIcon>
              <BigLabel>文档助手</BigLabel>
            </BigTool>
            <SmallStack $w={85} $ml={14}>
              <SmallTool>
                <Search size={24} color="#d9805a" strokeWidth={1.4} />
                查找
              </SmallTool>
              <SmallTool>
                <ReplaceIcon />
                替换
                <Caret />
              </SmallTool>
            </SmallStack>
          </RibbonGroup>

          <RibbonGroup $w={88} $pl={15}>
            <BigTool $w={70}>
              <BigIcon>
                <PaneIcon />
              </BigIcon>
              <BigLabel>选择窗格</BigLabel>
            </BigTool>
          </RibbonGroup>
          <RibbonScroll>
            <ChevronRight size={12} />
          </RibbonScroll>
        </Ribbon>

        <Work>
          <SidePanel>
            <ViewSwitch>
              <ViewLabel>大纲</ViewLabel>
              <ViewPill>幻灯片</ViewPill>
            </ViewSwitch>
            <ThumbList>
              <ThumbRow>
                <ThumbNumber>54</ThumbNumber>
                <ThumbFrame>
                  <ThumbScale>
                    <SlideFrame>
                      <ThumbTitle>商城检索-检索条件分析</ThumbTitle>
                      <ThumbBullets $top={150} $lh={52} $size={25}>
                        <ThumbLine>• 1、全文检索：skuTitle》keyword</ThumbLine>
                        <ThumbLine>• 2、排序：saleCount（热度）、hotScore（热度分）、skuPrice（价格）</ThumbLine>
                        <ThumbLine>• 3、过滤：hasStock、skuPrice区间、brandId、catalog3Id、attrs</ThumbLine>
                        <ThumbLine>• 4、聚合：attrs</ThumbLine>
                        <ThumbLine>&nbsp;</ThumbLine>
                        <ThumbLine>• 完整检索语法</ThumbLine>
                        <ThumbWrapLine>
                          • keyword=小米&amp;sort=saleCount_desc/asc&amp;hasStock=0/1&amp;skuPrice=400_1900&amp;brandId=1&amp;catalog3Id=1&amp;attrs=1_3G:4G:5G&amp;attrs=2_骁龙845&amp;attrs=4_高清屏
                        </ThumbWrapLine>
                      </ThumbBullets>
                    </SlideFrame>
                  </ThumbScale>
                </ThumbFrame>
              </ThumbRow>
              <ThumbRow>
                <ThumbNumber>55</ThumbNumber>
                <ThumbFrame>
                  <ThumbScale>
                    <SlideFrame>
                      <ThumbTitle>MQS&amp;MQS集群架构</ThumbTitle>
                      <ThumbBullets $top={143} $lh={44} $size={22}>
                        <ThumbLine>• 顺序</ThumbLine>
                        <ThumbLine $level={1}>• Message Pepper Argument 1、消息确保事务</ThumbLine>
                        <ThumbLine $level={2}>• 异步化，同步会造成阻塞，数据库连接会很容易被耗尽</ThumbLine>
                        <ThumbLine $level={2}>• 如果订单，订单同步处理时间过长</ThumbLine>
                        <ThumbLine $level={2}>• 流量控制，消费者能处理的并发是有限的，需要进来的流量放到队列里，消费者慢慢消费</ThumbLine>
                        <ThumbLine $level={2}>• 最大消息，消费者最大接收数据量，如消息体过大则消费失败</ThumbLine>
                        <ThumbLine $level={2}>• 可靠性</ThumbLine>
                        <ThumbLine>• 集群</ThumbLine>
                        <ThumbLine $level={1}>• 确保主从切换时数据不会丢失数据并同步</ThumbLine>
                        <ThumbLine $level={1}>• 保证消息可靠性和持久化存储，消息发送者的confirm机制</ThumbLine>
                      </ThumbBullets>
                    </SlideFrame>
                  </ThumbScale>
                </ThumbFrame>
              </ThumbRow>
              <ThumbRow>
                <ThumbNumber>56</ThumbNumber>
                <ThumbFrame>
                  <ThumbScale>
                    <SlideFrame>
                      <OauthSlide />
                    </SlideFrame>
                  </ThumbScale>
                </ThumbFrame>
              </ThumbRow>
              <ThumbRow>
                <ThumbNumber $active>57</ThumbNumber>
                <ThumbFrame $active>
                  <ThumbScale>
                    <SlideFrame>
                      <SessionSlide thick />
                    </SlideFrame>
                  </ThumbScale>
                </ThumbFrame>
              </ThumbRow>
            </ThumbList>
            <SideScrollThumb />
            <AddSlide>
              <Plus size={28} strokeWidth={1.6} />
            </AddSlide>
          </SidePanel>

          <CanvasColumn>
            <CanvasArea>
              <SlideFrame>
                <SessionSlide cursor />
              </SlideFrame>
            </CanvasArea>
            <NotesBar>
              <NotesIcon />
              单击此处添加备注
            </NotesBar>
          </CanvasColumn>

          <ScrollColumn>
            <ScrollTrack />
            <ScrollArrow $top={22} $up />
            <ScrollThumb />
            <ScrollArrow $top={684} />
            <ScrollArrow $top={708} $up />
            <ScrollArrow $top={716} $up />
            <ScrollArrow $top={736} />
            <ScrollArrow $top={744} />
          </ScrollColumn>

          <IconRail>
            <RailHandle />
            <RailIcon>
              <SpeedStar />
            </RailIcon>
            <RailIcon>
              <SwapSlides />
            </RailIcon>
            <RailIcon>
              <Shapes />
            </RailIcon>
            <RailIcon>
              <TextFill />
            </RailIcon>
            <RailIcon>
              <TableIcon />
            </RailIcon>
            <RailIcon>
              <LayoutGrid size={24} strokeWidth={1.5} />
            </RailIcon>
            <RailIcon>
              <BarsIcon />
            </RailIcon>
            <RailIcon>
              <SlidersHorizontal size={24} strokeWidth={1.5} />
            </RailIcon>
            <RailIcon>
              <Images size={24} strokeWidth={1.5} />
            </RailIcon>
            <RailIcon>
              <ShareBox />
            </RailIcon>
            <RailIcon>
              <Archive size={24} strokeWidth={1.5} />
            </RailIcon>
            <RailIcon>
              <ImageIcon size={24} strokeWidth={1.5} />
            </RailIcon>
            <RailIcon>
              <Volume2 size={24} strokeWidth={1.5} />
            </RailIcon>
            <RailIcon>
              <HexBadge />
            </RailIcon>
            <RailIcon>
              <InfoClip />
            </RailIcon>
            <LevelMeter />
            <RailFold>
              <ChevronDown size={14} />
            </RailFold>
          </IconRail>
        </Work>

        <StatusBar>
          <StatusCell $w={130} $ml={-5}>
            幻灯片 57 / 63
          </StatusCell>
          <StatusCell $w={125} $pl={17}>
            Office 主题
          </StatusCell>
          <StatusCell $w={150} $pl={17}>
            <ShieldMark />
            文档未保护
          </StatusCell>
          <StatusTool $w={140} $ml={630}>
            <BeautifyIcon />
            一键美化
            <Caret $up />
          </StatusTool>
          <Spring />
          <StatusTool $w={48}>
            <OutlineList />
            <Caret />
          </StatusTool>
          <StatusTool $w={32} $on>
            <NormalView />
          </StatusTool>
          <StatusTool $w={40}>
            <LayoutGrid size={24} strokeWidth={1.5} />
          </StatusTool>
          <StatusTool $w={40}>
            <BookView />
          </StatusTool>
          <StatusTool $w={40}>
            <TapeView />
          </StatusTool>
          <PlayButton>
            <Svg s={22} c="#fff">
              <path d="M8 5l9 7-9 7z" fill="#fff" />
            </Svg>
          </PlayButton>
          <StatusTool $w={24}>
            <Caret />
          </StatusTool>
          <StatusTool $w={81} $pl={13}>
            67%
            <Caret />
          </StatusTool>
          <StatusTool $w={26}>
            <Minus size={20} strokeWidth={3} />
          </StatusTool>
          <SliderTrack />
          <SliderKnob />
          <StatusTool $w={224} />
        </StatusBar>
      </Window>
      <TaskLine />
      <ImeBar>
        <svg width="30" height="30" viewBox="0 0 30 30" fill="none">
          <path d="M5 7v8a10 10 0 0 0 20 0V7" stroke="#3f9a4a" strokeWidth="4" />
          <path d="M11 6v9a4 4 0 0 0 8 0V6" stroke="#f0c030" strokeWidth="3.500" />
        </svg>
        英
        <svg width="22" height="26" viewBox="0 0 24 24" fill="#3f8bcb">
          <path d="M15 2c2 7-2 14-12 14 3 6 13 8 17 2 3-5 0-13-5-16z" />
        </svg>
        <svg width="20" height="26" viewBox="0 0 20 26" fill="#3f8bcb">
          <circle cx="5" cy="6" r="2" />
          <path d="M14 14h3v4l-3 4z" />
          <circle cx="15" cy="8" r="2" />
        </svg>
        <svg width="28" height="26" viewBox="0 0 28 26" fill="none" stroke="#3f8bcb" strokeWidth="2">
          <rect x="2" y="4" width="24" height="18" rx="2" />
          <path d="M6 9h16M6 13h16M6 17h16" strokeDasharray="2 1.500" />
        </svg>
        <svg width="20" height="28" viewBox="0 0 20 28" fill="#3f8bcb">
          <circle cx="10" cy="7" r="5" />
          <path d="M2 26c0-14 16-14 16 0z" />
        </svg>
        <svg width="22" height="28" viewBox="0 0 24 24" fill="#3f8bcb">
          <path d="M21 3l-5 5-2-2 4-4c-4-1-8 2-7 7L3 17v4h4l8-8c5 1 8-3 6-10z" />
        </svg>
      </ImeBar>
      <Caption>
        <BiliMark>bilibili</BiliMark>
        <CaptionText>BV1rK4y1C7fv P225 00:07:37/00:13:27</CaptionText>
      </Caption>
    </Screen>
  );
};

export default App;
